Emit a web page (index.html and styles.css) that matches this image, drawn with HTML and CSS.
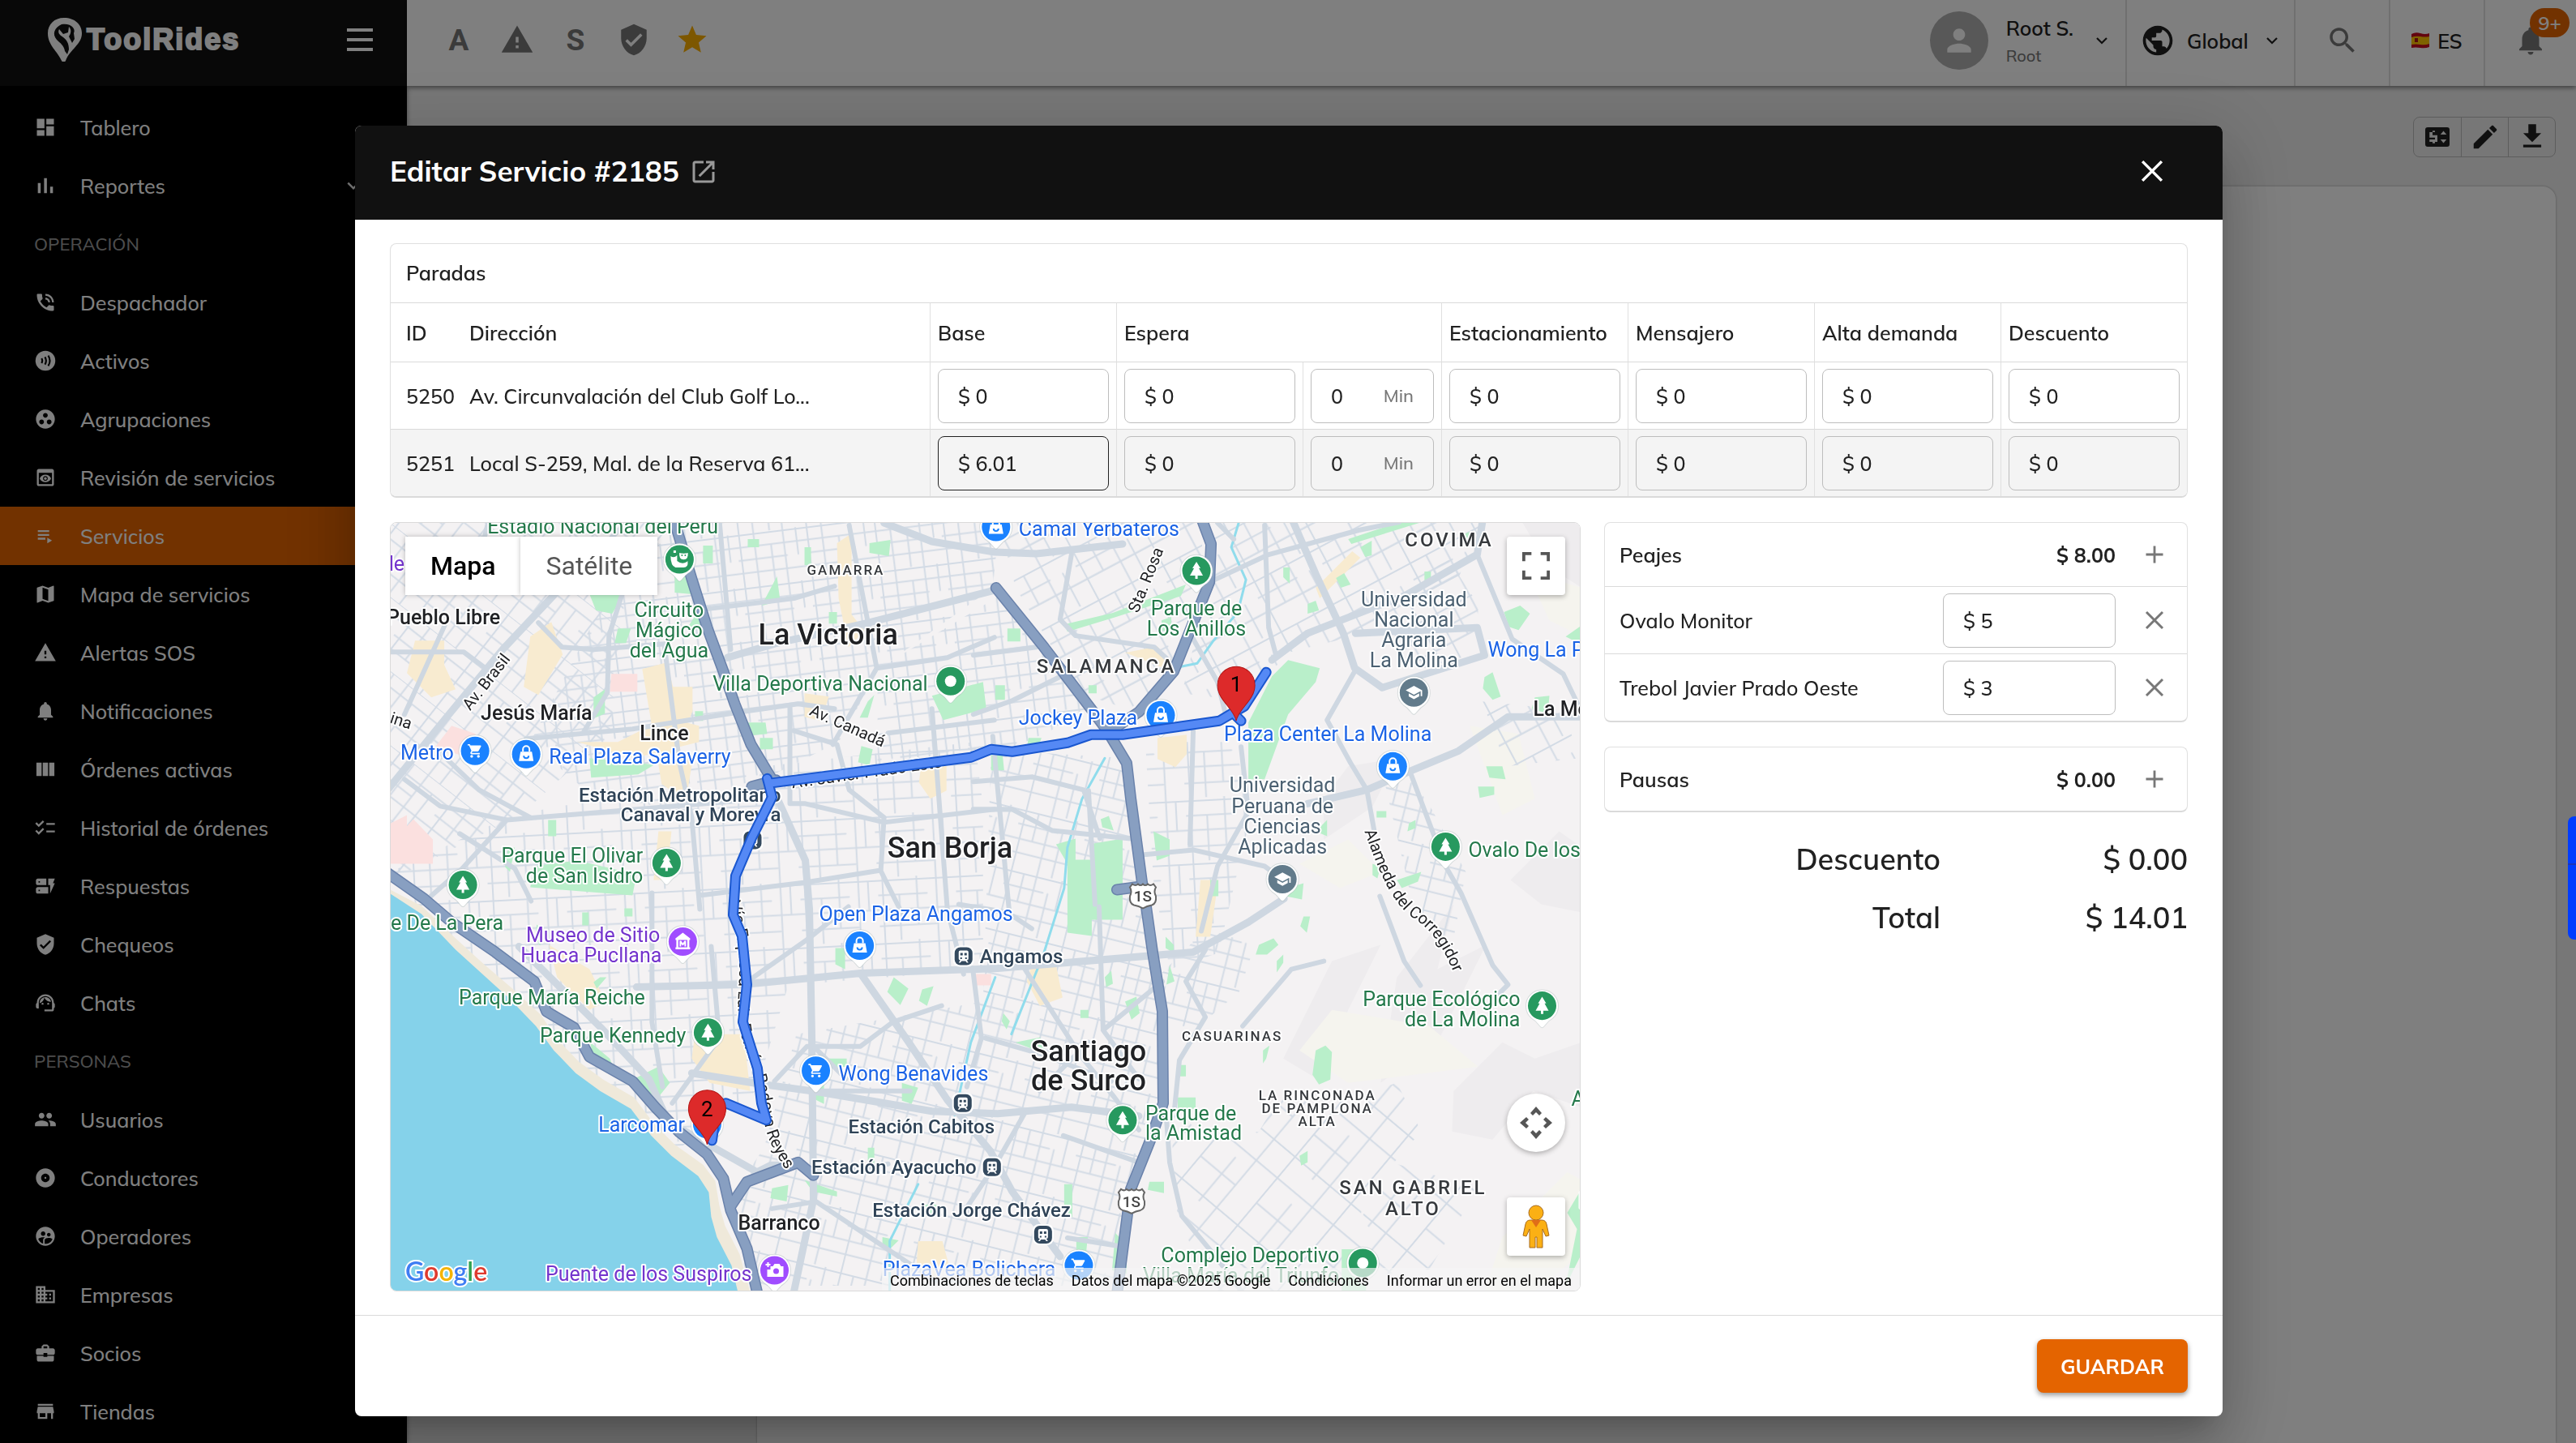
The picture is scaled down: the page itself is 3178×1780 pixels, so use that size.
FILE: index.html
```html
<!DOCTYPE html>
<html lang="es">
<head>
  <meta charset="UTF-8" />
  <title>ToolRides - Editar Servicio</title>
  <link rel="stylesheet" href="styles.css">
</head>
<body>

<!-- icon sprite -->
<svg class="sprite" aria-hidden="true">
  <symbol id="i-chevron" viewBox="0 0 24 24"><path d="M4 8l8 8 8-8" fill="none" stroke="currentColor" stroke-width="3"/></symbol>
  <symbol id="i-warning" viewBox="0 0 24 24"><path d="M1 21h22L12 2 1 21zm12-3h-2v-2h2v2zm0-4h-2v-4h2v4z"/></symbol>
  <symbol id="i-shield" viewBox="0 0 24 24"><path d="M12 1L3 5v6c0 5.55 3.84 10.74 9 12 5.16-1.26 9-6.45 9-12V5l-9-4zm-2 16l-4-4 1.41-1.41L10 14.17l6.59-6.59L18 9l-8 8z"/></symbol>
  <symbol id="i-bell" viewBox="0 0 24 24"><path d="M12 22c1.1 0 2-.9 2-2h-4c0 1.1.89 2 2 2zm6-6v-5c0-3.07-1.64-5.64-4.5-6.32V4c0-.83-.67-1.5-1.5-1.5s-1.5.67-1.5 1.5v.68C7.63 5.36 6 7.92 6 11v5l-2 2v1h16v-1l-2-2z"/></symbol>
  <symbol id="i-plus" viewBox="0 0 24 24"><path d="M12 3v18M3 12h18" fill="none" stroke="currentColor" stroke-width="2.4"/></symbol>
  <symbol id="i-close" viewBox="0 0 24 24"><path d="M4.5 4.5l15 15M19.5 4.5l-15 15" fill="none" stroke="currentColor" stroke-width="2.2"/></symbol>
  <!-- map markers, centred on 0,0 -->
  <symbol id="m-base" viewBox="-26 -26 52 60" overflow="visible"><path d="M0 27C-3 27-5 20-13 15.5A20 20 0 1 1 13 15.5C5 20 3 27 0 27z" fill="#fff" stroke="#9aa" stroke-opacity=".35"/><circle r="17.5" fill="currentColor"/></symbol>
  <symbol id="m-tree" viewBox="-26 -26 52 60" overflow="visible"><use href="#m-base" x="-26" y="-26" width="52" height="60"/><path d="M0-11L-5-3h2L-8 6h6.5v4h3V6H8L3-3h2z" fill="#fff"/></symbol>
  <symbol id="m-dot" viewBox="-26 -26 52 60" overflow="visible"><use href="#m-base" x="-26" y="-26" width="52" height="60"/><circle r="7" fill="#fff"/></symbol>
  <symbol id="m-bag" viewBox="-26 -26 52 60" overflow="visible"><use href="#m-base" x="-26" y="-26" width="52" height="60"/><path d="M-7-3H7L9 8.5H-9z" fill="#fff"/><path d="M-4-3v-3a4 4 0 0 1 8 0v3" fill="none" stroke="#fff" stroke-width="2"/><path d="M-3 2a3 3 0 0 0 6 0" fill="none" stroke="currentColor" stroke-width="2"/></symbol>
  <symbol id="m-cart" viewBox="-26 -26 52 60" overflow="visible"><use href="#m-base" x="-26" y="-26" width="52" height="60"/><path transform="translate(-10 -10) scale(.83)" fill="#fff" d="M7 18c-1.1 0-1.99.9-1.99 2S5.9 22 7 22s2-.9 2-2-.9-2-2-2zM1 2v2h2l3.6 7.59-1.35 2.45c-.16.28-.25.61-.25.96 0 1.1.9 2 2 2h12v-2H7.42c-.14 0-.25-.11-.25-.25l.03-.12.9-1.63h7.45c.75 0 1.41-.41 1.75-1.03l3.58-6.49c.08-.14.12-.31.12-.48 0-.55-.45-1-1-1H5.21l-.94-2H1zm16 16c-1.1 0-1.99.9-1.99 2s.89 2 1.99 2 2-.9 2-2-.9-2-2-2z"/></symbol>
  <symbol id="m-school" viewBox="-26 -26 52 60" overflow="visible"><use href="#m-base" x="-26" y="-26" width="52" height="60"/><path transform="translate(-11 -11) scale(.92)" fill="#fff" d="M5 13.18v4L12 21l7-3.82v-4L12 17l-7-3.82zM12 3L1 9l11 6 9-4.91V17h2V9L12 3z"/></symbol>
  <symbol id="m-museum" viewBox="-26 -26 52 60" overflow="visible"><use href="#m-base" x="-26" y="-26" width="52" height="60"/><path d="M0-11L-9-4v2H9v-2zM-9 7H9v2.5H-9zM-8-2h2.5v9H-8zM5.5-2H8v9H5.5zM-4 6v-7h2l2 3 2-3h2v7H2V3L0 5-2 3v3z" fill="#fff"/></symbol>
  <symbol id="m-camera" viewBox="-26 -26 52 60" overflow="visible"><use href="#m-base" x="-26" y="-26" width="52" height="60"/><path d="M-9-1h4v-4h3l2-3h6l2 3h3V8H-9z" fill="#fff"/><circle cx="2" cy="1" r="3.5" fill="currentColor"/><path d="M-8-10v6M-11-7h6" stroke="#fff" stroke-width="2"/></symbol>
  <symbol id="m-mask" viewBox="-26 -26 52 60" overflow="visible"><use href="#m-base" x="-26" y="-26" width="52" height="60"/><path d="M-11-4q4 3 8-1v7q6 5 12 1l1-1q1 8-5 8h-10q-6-2-6-14z" fill="#fff"/><path d="M-1-9q6 2 12 0 1 10-6 10t-6-10z" fill="#fff" stroke="currentColor" stroke-width="1.5"/><circle cx="3" cy="-5" r="1" fill="currentColor"/><circle cx="7" cy="-5" r="1" fill="currentColor"/><path d="M-6-11v3" stroke="#fff" stroke-width="3"/></symbol>
  <symbol id="m-train" viewBox="-14 -14 28 28" overflow="visible"><rect x="-13" y="-13" width="26" height="26" rx="8" fill="#fff"/><rect x="-11" y="-11" width="22" height="22" rx="7" fill="#34495e"/><path d="M-6-5q0-2 2-2h8q2 0 2 2v8q0 2-2 2l2 3h-2l-1.5-2h-5L-4 8h-2l2-3q-2 0-2-2z" fill="#fff"/><path d="M-4-4h3v3h-3zM1-4h3v3H1zM-4 1.5h2v2h-2zM2 1.5h2v2H2z" fill="#34495e"/></symbol>
  <symbol id="m-shield" viewBox="-18 -18 36 36" overflow="visible"><path d="M-13-15q4 3 7 0 3 3 6 0 3 3 6 0 3 3 7 0l3 4q-3 5 0 11 1 9-5 11-6 1-11 4-5-3-11-4-6-2-5-11 3-6 0-11z" fill="#fff" stroke="#666" stroke-width="2"/></symbol>
</svg>

<div class="app">
  <aside class="sidebar">
    <div class="brand">
      <a class="logo" href="#">
        <svg width="44" height="54" viewBox="0 0 44 54"><path d="M21 0C9 0 1 8 1 19c0 15 12 22 17 34 1 2 4 2 5 0 5-14 20-20 20-34C43 8 34 0 21 0z"/><path class="logo-cut" d="M18 8c-9 4-12 12-6 19 4 4 9 7 10 14l3 4 2-6c0-8-3-12-7-15-5-3-7-6-5-10l5 6 6-2 1-7c4 4 2 9 0 12l4 8 3-5-1-7c3-6-4-13-15-11z"/></svg>
        <span>ToolRides</span>
      </a>
      <button class="burger" aria-label="Menú"><svg width="32" height="30" viewBox="0 0 32 30"><path d="M0 3h32M0 15h32M0 27h32" stroke="currentColor" stroke-width="4"/></svg></button>
    </div>
    <nav class="menu">
      <a href="#"><svg viewBox="0 0 24 24"><path d="M3 13h8V3H3v10zm0 8h8v-6H3v6zm10 0h8V11h-8v10zm0-18v6h8V3h-8z"/></svg>Tablero</a>
      <a href="#"><svg viewBox="0 0 24 24"><path d="M4 9.2h3V20H4zM10.6 4h3v16h-3zM17 13h3v7h-3z"/></svg>Reportes<svg class="more" viewBox="0 0 24 24"><use href="#i-chevron"/></svg></a>
      <h2>OPERACIÓN</h2>
      <a href="#"><svg viewBox="0 0 24 24"><path d="M20 15.5c-1.25 0-2.45-.2-3.57-.57-.35-.11-.74-.03-1.02.24l-2.2 2.2c-2.83-1.44-5.15-3.75-6.59-6.59l2.2-2.21c.28-.26.36-.65.25-1C8.7 6.45 8.5 5.25 8.5 4c0-.55-.45-1-1-1H4c-.55 0-1 .45-1 1 0 9.39 7.61 17 17 17 .55 0 1-.45 1-1v-3.5c0-.55-.45-1-1-1zM19 12h2c0-4.97-4.03-9-9-9v2c3.87 0 7 3.13 7 7zm-4 0h2c0-2.76-2.24-5-5-5v2c1.66 0 3 1.34 3 3z"/></svg>Despachador</a>
      <a href="#"><svg viewBox="0 0 24 24"><circle cx="12" cy="12" r="10.5"/><path d="M8 9.5q1.5 2.5 0 5M11.5 8q2.5 4 0 8M15 6.5q3.5 5.5 0 11" fill="none" stroke="#000" stroke-width="1.8"/></svg>Activos</a>
      <a href="#"><svg viewBox="0 0 24 24"><path d="M12 2C6.48 2 2 6.48 2 12s4.48 10 10 10 10-4.48 10-10S17.52 2 12 2zM8 17.5c-1.38 0-2.5-1.12-2.5-2.5s1.12-2.5 2.5-2.5 2.5 1.12 2.5 2.5-1.12 2.5-2.5 2.5zM9.5 8c0-1.38 1.12-2.5 2.5-2.5s2.5 1.12 2.5 2.5-1.12 2.5-2.5 2.5S9.5 9.38 9.5 8zm6.5 9.5c-1.38 0-2.5-1.12-2.5-2.5s1.12-2.5 2.5-2.5 2.5 1.12 2.5 2.5-1.12 2.5-2.5 2.5z"/></svg>Agrupaciones</a>
      <a href="#"><svg viewBox="0 0 24 24"><path d="M19 3H5c-1.11 0-2 .9-2 2v14c0 1.1.89 2 2 2h14c1.1 0 2-.9 2-2V5c0-1.1-.89-2-2-2zm0 16H5V7h14v12zm-5.5-6c0 .83-.67 1.5-1.5 1.5s-1.5-.67-1.5-1.5.67-1.5 1.5-1.5 1.5.67 1.5 1.5zM12 9c-2.73 0-5.06 1.66-6 4 .94 2.34 3.27 4 6 4s5.06-1.66 6-4c-.94-2.34-3.27-4-6-4zm0 6.5c-1.38 0-2.5-1.12-2.5-2.5s1.12-2.5 2.5-2.5 2.5 1.12 2.5 2.5-1.12 2.5-2.5 2.5z"/></svg>Revisión de servicios</a>
      <a href="#" class="active"><svg viewBox="0 0 24 24"><path d="M4 10h12v2H4zm0-4h12v2H4zm0 8h8v2H4zm10 0v6l5-3z"/></svg>Servicios</a>
      <a href="#"><svg viewBox="0 0 24 24"><path d="M20.5 3l-.16.03L15 5.1 9 3 3.36 4.9c-.21.07-.36.25-.36.48V20.5c0 .28.22.5.5.5l.16-.03L9 18.9l6 2.1 5.64-1.9c.21-.07.36-.25.36-.48V3.5c0-.28-.22-.5-.5-.5zM15 19l-6-2.11V5l6 2.11V19z"/></svg>Mapa de servicios</a>
      <a href="#"><svg viewBox="0 0 24 24"><use href="#i-warning"/></svg>Alertas SOS</a>
      <a href="#"><svg viewBox="0 0 24 24"><use href="#i-bell"/></svg>Notificaciones</a>
      <a href="#"><svg viewBox="0 0 24 24"><path d="M2.5 5h5.5v14H2.5zM9.2 5h5.6v14H9.2zM16 5h5.5v14H16z"/></svg>Órdenes activas</a>
      <a href="#"><svg viewBox="0 0 24 24"><path d="M2 7l3 3 5-5M2 15l3 3 5-5M13 8h9M13 16h9" fill="none" stroke="currentColor" stroke-width="2"/></svg>Historial de órdenes</a>
      <a href="#"><svg viewBox="0 0 24 24"><path d="M17 20v-9h-2V4h7l-2 5h2l-5 11zm-2-7v7H4c-1.1 0-2-.9-2-2v-3c0-1.1.9-2 2-2h11zm-8.75 2.75h-1.5v1.5h1.5v-1.5zM13 4v7H4c-1.1 0-2-.9-2-2V6c0-1.1.9-2 2-2h9zM6.25 6.75h-1.5v1.5h1.5v-1.5z"/></svg>Respuestas</a>
      <a href="#"><svg viewBox="0 0 24 24"><use href="#i-shield"/></svg>Chequeos</a>
      <a href="#"><svg viewBox="0 0 24 24"><path d="M21 12.22C21 6.73 16.74 3 12 3c-4.69 0-9 3.65-9 9.28-.6.34-1 .98-1 1.72v2c0 1.1.9 2 2 2h1v-6.1c0-3.87 3.13-7 7-7s7 3.13 7 7V19h-8v2h8c1.1 0 2-.9 2-2v-1.22c.59-.31 1-.92 1-1.64v-2.3c0-.7-.41-1.31-1-1.62z"/><circle cx="9" cy="13" r="1"/><circle cx="15" cy="13" r="1"/><path d="M18 11.03C17.52 8.18 15.04 6 12.05 6c-3.03 0-6.29 2.51-6.03 6.45 2.47-1.01 4.33-3.21 4.86-5.89 1.31 2.63 4 4.44 7.12 4.47z"/></svg>Chats</a>
      <h2>PERSONAS</h2>
      <a href="#"><svg viewBox="0 0 24 24"><path d="M16 11c1.66 0 2.99-1.34 2.99-3S17.66 5 16 5c-1.66 0-3 1.34-3 3s1.34 3 3 3zm-8 0c1.66 0 2.99-1.34 2.99-3S9.66 5 8 5C6.34 5 5 6.34 5 8s1.34 3 3 3zm0 2c-2.33 0-7 1.17-7 3.5V19h14v-2.5c0-2.33-4.67-3.5-7-3.5zm8 0c-.29 0-.62.02-.97.05 1.16.84 1.97 1.97 1.97 3.45V19h6v-2.5c0-2.33-4.67-3.5-7-3.5z"/></svg>Usuarios</a>
      <a href="#"><svg viewBox="0 0 24 24"><path d="M12 2C6.48 2 2 6.48 2 12s4.48 10 10 10 10-4.48 10-10S17.52 2 12 2zm0 14.5c-2.49 0-4.5-2.01-4.5-4.5S9.51 7.5 12 7.5s4.5 2.01 4.5 4.5-2.01 4.5-4.5 4.5zm0-5.5c-.55 0-1 .45-1 1s.45 1 1 1 1-.45 1-1-.45-1-1-1z"/></svg>Conductores</a>
      <a href="#"><svg viewBox="0 0 24 24"><path d="M11.99 2c-5.52 0-10 4.48-10 10s4.48 10 10 10 10-4.48 10-10-4.48-10-10-10zm3.61 6.34c1.07 0 1.93.86 1.93 1.93 0 1.07-.86 1.93-1.93 1.93-1.07 0-1.93-.86-1.93-1.93-.01-1.07.86-1.93 1.93-1.93zm-6-1.58c1.3 0 2.36 1.06 2.36 2.36 0 1.3-1.06 2.36-2.36 2.36s-2.36-1.06-2.36-2.36c0-1.31 1.05-2.36 2.36-2.36zm0 9.13v3.75c-2.4-.75-4.3-2.6-5.14-4.96 1.05-1.12 3.67-1.69 5.14-1.69.53 0 1.2.08 1.9.22-1.64.87-1.9 2.02-1.9 2.68zM11.99 20c-.27 0-.53-.01-.79-.04v-4.07c0-1.42 2.94-2.13 4.4-2.13 1.07 0 2.92.39 3.84 1.15-1.17 2.97-4.06 5.09-7.45 5.09z"/></svg>Operadores</a>
      <a href="#"><svg viewBox="0 0 24 24"><path d="M12 7V3H2v18h20V7H12zM6 19H4v-2h2v2zm0-4H4v-2h2v2zm0-4H4V9h2v2zm0-4H4V5h2v2zm4 12H8v-2h2v2zm0-4H8v-2h2v2zm0-4H8V9h2v2zm0-4H8V5h2v2zm10 12h-8v-2h2v-2h-2v-2h2v-2h-2V9h8v10zm-2-8h-2v2h2v-2zm0 4h-2v2h2v-2z"/></svg>Empresas</a>
      <a href="#"><svg viewBox="0 0 24 24"><path d="M10 16v-1H3.01L3 19c0 1.11.89 2 2 2h14c1.11 0 2-.89 2-2v-4h-7v1h-4zm10-9h-4.01V5l-2-2h-4l-2 2v2H4c-1.1 0-2 .9-2 2v3c0 1.11.89 2 2 2h6v-2h4v2h6c1.1 0 2-.9 2-2V9c0-1.1-.9-2-2-2zm-6 0h-4V5h4v2z"/></svg>Socios</a>
      <a href="#"><svg viewBox="0 0 24 24"><path d="M20 4H4v2h16V4zm1 10v-2l-1-5H4l-1 5v2h1v6h10v-6h4v6h2v-6h1zm-9 4H6v-4h6v4z"/></svg>Tiendas</a>
    </nav>
  </aside>

  <div class="main">
    <header class="topbar">
      <div class="quick">
        <button>A</button>
        <button aria-label="Alertas"><svg width="42" height="42"><use href="#i-warning"/></svg></button>
        <button>S</button>
        <button aria-label="Chequeos"><svg width="42" height="42"><use href="#i-shield"/></svg></button>
        <button class="star" aria-label="Favoritos"><svg width="42" height="42" viewBox="0 0 24 24"><path d="M12 17.27L18.18 21l-1.64-7.03L22 9.24l-7.19-.61L12 2 9.19 8.63 2 9.24l5.46 4.73L5.82 21z"/></svg></button>
      </div>
      <button class="user">
        <span class="avatar"><svg width="44" height="44" viewBox="0 0 24 24"><path d="M12 12c2.21 0 4-1.79 4-4s-1.79-4-4-4-4 1.79-4 4 1.79 4 4 4zm0 2c-2.67 0-8 1.34-8 4v2h16v-2c0-2.66-5.33-4-8-4z"/></svg></span>
        <span class="who"><span>Root S.</span><small>Root</small></span>
        <svg class="caret" viewBox="0 0 24 24"><use href="#i-chevron"/></svg>
      </button>
      <button class="region">
        <svg width="44" height="44" viewBox="0 0 24 24"><path d="M12 2C6.48 2 2 6.48 2 12s4.48 10 10 10 10-4.48 10-10S17.52 2 12 2zm-1 17.93c-3.95-.49-7-3.85-7-7.93 0-.62.08-1.21.21-1.79L9 15v1c0 1.1.9 2 2 2v1.93zm6.9-2.54c-.26-.81-1-1.39-1.9-1.39h-1v-3c0-.55-.45-1-1-1H8v-2h2c.55 0 1-.45 1-1V7h2c1.1 0 2-.9 2-2v-.41c2.93 1.19 5 4.06 5 7.41 0 2.08-.8 3.97-2.1 5.39z"/></svg>
        <span>Global</span>
        <svg class="caret" viewBox="0 0 24 24"><use href="#i-chevron"/></svg>
      </button>
      <button class="cell muted" aria-label="Buscar"><svg width="42" height="42" viewBox="0 0 24 24"><path d="M15.5 14h-.79l-.28-.27C15.41 12.59 16 11.11 16 9.5 16 5.91 13.09 3 9.5 3S3 5.91 3 9.5 5.91 16 9.5 16c1.61 0 3.09-.59 4.23-1.57l.27.28v.79l5 4.99L20.49 19l-4.99-5zm-6 0C7.01 14 5 11.99 5 9.5S7.01 5 9.5 5 14 7.01 14 9.5 11.99 14 9.5 14z"/></svg></button>
      <button class="cell">
        <svg width="22" height="20" viewBox="0 0 22 20"><path fill="#c60b1e" d="M0 2q5-3 11-1t11 0v17q-5 2-11 1T0 19z"/><path fill="#ffc400" d="M0 6q5-2 11-1t11 0v9q-5 2-11 1T0 15z"/><path fill="#ad1519" d="M4 7h4v5H4z"/></svg>
        <span>ES</span>
      </button>
      <button class="cell muted bell" aria-label="Notificaciones"><svg width="42" height="42"><use href="#i-bell"/></svg><span class="badge">9+</span></button>
    </header>

    <div class="page">
      <div class="tools">
        <button aria-label="Precio"><svg width="36" height="36" viewBox="0 0 24 24"><path d="M4 4q-2 0-2 2v12q0 2 2 2h16q2 0 2-2V6q0-2-2-2zm8 4H8v2.5h4V16H10v1.2H8V16H5.5v-2H10v-1.5H5.5V8H8V6.8h2V8h2zm5 9l-2.5-3h5zm-2.5-7L17 7l2.5 3z"/></svg></button>
        <button aria-label="Editar"><svg width="38" height="38" viewBox="0 0 24 24"><path d="M3 17.25V21h3.75L17.81 9.94l-3.75-3.75L3 17.25zM20.71 7.04c.39-.39.39-1.02 0-1.41l-2.34-2.34c-.39-.39-1.02-.39-1.41 0l-1.83 1.83 3.75 3.75 1.83-1.83z"/></svg></button>
        <button aria-label="Descargar"><svg width="38" height="38" viewBox="0 0 24 24"><path d="M5 20h14v-2H5v2zM19 9h-4V2H9v7H5l7 7 7-7z"/></svg></button>
      </div>
      <div class="sheet"></div>
    </div>
  </div>
</div>

<div class="overlay">
  <section class="dialog" role="dialog" aria-labelledby="dlg-title">
    <header class="dialog-head">
      <h1 id="dlg-title">Editar Servicio #2185</h1>
      <a href="#" aria-label="Abrir servicio"><svg width="36" height="36" viewBox="0 0 24 24"><path d="M19 19H5V5h7V3H5c-1.11 0-2 .9-2 2v14c0 1.1.89 2 2 2h14c1.1 0 2-.9 2-2v-7h-2v7zM14 3v2h3.59l-9.83 9.83 1.41 1.41L19 6.41V10h2V3h-7z"/></svg></a>
      <button class="close" aria-label="Cerrar"><svg width="38" height="38"><use href="#i-close"/></svg></button>
    </header>

    <div class="dialog-body">
      <div class="card stops">
        <h3>Paradas</h3>
        <table>
          <colgroup><col class="c-id"><col><col class="c-money"><col class="c-money"><col class="c-min"><col class="c-money"><col class="c-money"><col class="c-money"><col class="c-money"></colgroup>
          <thead>
            <tr><th>ID</th><th>Dirección</th><th>Base</th><th colspan="2">Espera</th><th>Estacionamiento</th><th>Mensajero</th><th>Alta demanda</th><th>Descuento</th></tr>
          </thead>
          <tbody>
            <tr>
              <td>5250</td><td>Av. Circunvalación del Club Golf Lo...</td>
              <td><input value="$ 0" aria-label="Base 5250"></td>
              <td><input value="$ 0" aria-label="Espera 5250"></td>
              <td><label class="field"><input value="0" aria-label="Minutos de espera 5250"><span>Min</span></label></td>
              <td><input value="$ 0" aria-label="Estacionamiento 5250"></td>
              <td><input value="$ 0" aria-label="Mensajero 5250"></td>
              <td><input value="$ 0" aria-label="Alta demanda 5250"></td>
              <td><input value="$ 0" aria-label="Descuento 5250"></td>
            </tr>
            <tr class="hover">
              <td>5251</td><td>Local S-259, Mal. de la Reserva 61...</td>
              <td><input class="on" value="$ 6.01" aria-label="Base 5251"></td>
              <td><input value="$ 0" aria-label="Espera 5251"></td>
              <td><label class="field"><input value="0" aria-label="Minutos de espera 5251"><span>Min</span></label></td>
              <td><input value="$ 0" aria-label="Estacionamiento 5251"></td>
              <td><input value="$ 0" aria-label="Mensajero 5251"></td>
              <td><input value="$ 0" aria-label="Alta demanda 5251"></td>
              <td><input value="$ 0" aria-label="Descuento 5251"></td>
            </tr>
          </tbody>
        </table>
      </div>

      <div class="columns">
        <div class="map">
          <svg class="map-canvas" viewBox="0 0 1466 946" preserveAspectRatio="xMinYMin slice">
            <defs>
              <!-- street grids -->
              <pattern id="g1" width="88" height="72" patternUnits="userSpaceOnUse" patternTransform="rotate(38)"><path class="st" d="M0 0h88M0 16h88M0 34h52M0 50h88M8 0v72M30 0v50M52 0v72M70 16v56"/></pattern>
              <pattern id="g2" width="84" height="66" patternUnits="userSpaceOnUse" patternTransform="rotate(-7)"><path class="st" d="M0 2h84M0 17h84M0 33h60M0 49h84M4 0v66M22 0v66M42 17v49M58 0v66M74 0v33"/></pattern>
              <pattern id="g3" width="96" height="78" patternUnits="userSpaceOnUse" patternTransform="rotate(-3)"><path class="st" d="M0 4h96M0 22h60M0 40h96M0 60h70M6 0v78M26 22v56M48 0v60M72 0v78M84 4v36"/></pattern>
              <pattern id="g4" width="84" height="76" patternUnits="userSpaceOnUse" patternTransform="rotate(14)"><path class="st" d="M0 3h84M0 20h50M0 38h84M0 55h84M6 0v76M22 3v35M38 0v76M56 20v56M70 0v38"/></pattern>
              <pattern id="g5" width="90" height="70" patternUnits="userSpaceOnUse" patternTransform="rotate(-28)"><path class="st" d="M0 4h90M0 24h54M0 44h90M6 0v70M28 4v40M52 0v70M72 24v46"/></pattern>
              <pattern id="g6" width="110" height="90" patternUnits="userSpaceOnUse" patternTransform="rotate(-50)"><path class="st" d="M0 6h110M0 40h70M0 62h110M8 0v90M44 6v56M84 0v90"/></pattern>
              <path id="p-alameda" d="M1200 380C1218 430 1234 470 1262 488S1304 536 1320 580"/>
              <path id="p-bedoya" d="M417 468Q433 520 429 570T438 650Q454 690 460 735T516 830"/>
            </defs>

            <rect class="land" width="1468" height="948"/>
            <g class="relief">
              <path d="M1395 0h73v80l-40-25zM1180 300l60-10-30 60-60 40 0-50zM1240 560l70-90-20 80 60-30-60 120-70 50zM1310 700l60-60 40 20 58-20v80l-60-20-50 60-50-10zM1100 660l60-120 60-20-40 80-30 90zM1380 440l60-60 28 20v80l-50-10z"/>
              <path class="warm" d="M1330 250l60 10 20 80-40 20zM1160 600l120 20 60 50-160 20-60-40zM1370 880l80-80 18 10v90l-60 48h-60zM1400 60l68 20v60l-40-20zM1120 420l60-30 40 40-50 20z"/>
            </g>

            <!-- built up areas -->
            <path fill="url(#g1)" d="M0 0h350l-60 80-20 180-110 100L0 440z"/>
            <path fill="url(#g2)" d="M350 0h400l-8 80-140 100-50 90-80 40-130 40-90-10-80-70 100-190z"/>
            <path fill="url(#g3)" d="M150 360l110-20 180 0 20-40 260-30 10 80 0 200-240 20-40 130-120 90-60-20-80-160-110-80-80-100z"/>
            <path fill="url(#g4)" d="M740 280l170 10 20 150 20 160v110l-30 110-20 120H440l-20-110 40-60 40-140 230-40z"/>
            <path fill="url(#g2)" d="M600 180l150-90 120 140-110 50-160 20z"/>
            <path fill="url(#g5)" d="M750 0h250v80l-40 110-50 40-60-20-80-130z"/>
            <path fill="url(#g5)" d="M1015 0h330l-30 70-90 60-120 30-50 60-80-10 30-120z"/>
            <path fill="url(#g3)" d="M930 270h110l20 90-40 170-60 20-20-110z"/>
            <path fill="url(#g4)" d="M945 560l60-60 60 20-20 60-50 40h-40zM1225 320l40 0 60 110-20 110-50-90z"/>
            <path fill="url(#g6)" d="M960 720l50 40 60-10 30-50 80 10 60-20 30 60-70 80-20 100-60 20h-100l-50-90zM1180 880l60-90 100 30-60 100-100 10z"/>
            <path fill="url(#g5)" d="M1345 220l100 10 20 60-90 10zM1230 130l70-90 40 60v60l-70 20z"/>

            <!-- blocks and parks -->
            <g class="shop">
              <path d="M550 25l18-12 0 100 16 20-20 20-12-60zM172 140l26-18 14 40-30 50-18-10zM30 145h36v30l14 30-30 10-30-30zM310 180l30-8 8 30 24 0 0 30-20 50 20 10-8 50-30-20zM510 210l30 4-10 30-20-5zM655 290l30 0 0 40-20 10-14-20zM375 630l60 0 8 70-50-10-22-30zM195 520l50 30 20 40-20 10-40-40zM905 160l40-8 24 30-8 0-50-20zM790 545l30 0 8 40-28 10-16-30zM945 265l36-4 0 24-14 16-22-10zM998 440l22 0-10 70-18 0zM1140 80l45-45 10 8-50 50zM650 885l30 0 8 30-20 20-20-20zM330 380l16 0-6 60-16 0zM230 270h50l60-30 40 10 0 20-80 20z"/>
            </g>
            <g class="pink"><path d="M272 186l32 0 0 22-34 0zM75 250l30 10-20 26-30-10zM0 395l28-30 24 25 0 30-52 0zM716 556h24v14h-22zM0 370l20-10 0 40-20 10z"/></g>
            <g class="park">
              <path d="M1106 169l39 10-5 17-34 40-29 80h-20l0-70 29-57zM667 213l63-17 4 33-53 14zM177 423l53-7 73 17-5 26-126-10zM820 396l24-7v26h22v-20l36-6 0 100-38 0 0 20-30-4 0-85zM350 60h16l6 28-22-2zM245 88h42l-14 24-20-4zM245 290l80 8-20 12-58 4zM365 130l20-30 8 28zM458 100l18-34 4 30-22 6zM830 125l60-14 90-35-6 14-80 26-60 18zM1180 20l90-30 4 8-90 28zM1372 110l20-8 12 10-14 20-12-4zM1350 300h20l4 16-20-2zM1448 140l20-14v24zM1140 380l14-14 0 20zM1105 450l20-6-2 20-20-4z"/>
              <path d="M740 285l14 0 2 20-16 0zM440 246h22l2 14-20 2zM588 220l8-8-8 28-10 0zM580 275l14 4-4 20-14-4zM455 265h16v14h-16zM590 25l26-4-2 20-24-4zM440 20h14v10h-14zM540 110h10v14h-10zM510 30h8v22h-8zM385 28h12v22h-12zM250 215l14-10 0 30-14 6zM280 130h16l-6 18h-14zM375 232h10v12h-10zM194 366h10v20h-10zM145 400l8 0-6 30-6-6zM180 495l10 8-6 18-6-10zM236 480h8v16h-8zM258 560l8 0-12 14-4-8zM288 475h10v10h-10zM290 690l40-20 14 20-16 20zM246 640l24 20 10 24-30-20zM520 690l14-4 0 30-16-8zM548 524h12v26l-12-6zM540 660h22v10l-24 2zM620 560l18 14-10 20-16-16zM655 575l14-4-8 24-10-6zM655 840l20 0-10 12-12-4zM470 820l20-4-2 20-20-4zM510 810l40 14 0 6-30-6zM588 770h8v26h-8zM606 880l20 4-12 12-8-6zM630 690l20 6-8 20-12-4z"/>
              <path d="M850 600h10v10h-10zM905 590l14-6 4 20-10 8zM880 560l8-8 2 16-8 4zM755 604l8 10-4 10-6-10zM770 640l30-6 10 10-10 8zM845 880l14 0-4 40h-10zM830 815h10v40h-10zM893 875l14 14 0 36-18-4zM935 812h18l0 14-20-4zM970 708h22v14h-22zM972 668h8v14h-8zM955 510l10 10 0 10-10-6zM960 545l6 20-10 4zM1140 650l12-6 8 8-2 34-14 6-8-12zM1070 520l18-8 6 8-14 12-14 0zM1092 540l8-8 0 10-8 12zM1125 485l8 0-4 20-8-8zM1075 650l8-6-4 16-4 6zM1120 780l10-6 0 14-8 4zM950 120l12-4 0 20-12-4zM760 130h16v16h-16zM745 200h12v18h-12zM786 265h16l-4 12-14 0zM860 200h10v10h-10zM1100 55h8l0 20-8-8zM1195 30l14-8 0 18-8 2zM1130 100l10-4 4 12-14 4zM1165 68l10-6 8 14-12 4zM1274 60h8v14h-8zM1320 15l10-4 0 10-8 4zM1348 190l10-6 10 30-10 4-12-14zM1410 215l18-2-2 22-20-6zM1340 325l20 0 0 10-18 4zM1215 355h12v8h-12zM1255 370l8-4 0 10-10 4zM1210 420l10 4-4 14-6-4zM1240 440l30-10-4 12-20 8zM1172 895h30v53h-30zM1450 850l18-30 0 80-20 40 14-70zM940 380l20 10 0 20-16 6zM875 365l10-4 6 18-14-4zM1010 440h10v20h-10z"/>
            </g>

            <!-- streams -->
            <g class="stream"><path d="M1045 0l-9 30 18 40-10 40-30 35-20 28-20 4-40 50M880 290l-28 50-18 60-4 50-25 80-40 100M650 815l-35 70 0 63M745 560l-30 80-20 90"/></g>

            <!-- avenues -->
            <g class="road big">
              <path d="M-7 333L66 243 138 156 201 89 222 60M303 572l131-3 145-14 169-6 241-20 68-37 44-29M371 678l82 13 73 10 141 24 81 3 91-8 83 11M579 555l58 83 49 73 53 63 27 50 59 80M158 522l101 100 59 63 24 53 106 60M415 166l58-17 116-26 155-40"/>
              <path d="M1086 169l44-33 121-47 88-50 8-50M1130 346l73-17 53-23 60-25 61-42h92M1111-4l29 67 34 73 14 43 34 24 126-40-9-34-150 7M608 0l59 23 77 13 52 2 106-12M478 343l33 73 5 60 3 159 2 199-24 113"/>
            </g>
            <g class="road">
              <path d="M68 123L17 236M-6 159h96l40 30M288 79l-19 60-2 70-30 50M182 123l29 30 39 3 87-7M167 266l131-12 126-20 78-11 45 6M61 283l48 46 63 34M17 316l44 33 82 17 281-23M143 366l-55 60-42 37M85 383l68 43 20 40M337 149l19 147 15 67 10 113M405-4l14 160M390 106l107-13 50-15M565 3l34 176-54 94M599 179l87-13 58-25M613 259l131-16M667 229l4 50 15 197 20 80M497 256l53 17 15 56 43 34-4 66 30 60M608 369l136-16M492 226v120l19 0 97 23M381 459l130-16 93-15M434 569l80-56 50-40"/>
              <path d="M395 522l10 113-58 80M322 456v159l13 80M473 688l40-43h66l40-30 60-20M521 645l40 40M781 549l68 106 43 53 30 40M718 555l10 80-18 60M733 635l70 20 85 33M873 473l5 152 44 60M878 625l73-60M781 728l-34 60-40 60M829 755l93 33M834 881l63 10M955 721l5 67 15 66 44 53 30 41M1004 526l-24 39 24 44-32 53-6 60M1077 3l5 126 9 34M1009 73l73-34 111-30 50-10M1339 39l43 104 63 43 24 50M1188 183l-34 60 29 53 20 33 9 50M1256 306l44 117 19 33 39 89 19 24-20 20M989 256l-4 140"/>
              <path d="M718 319l73-6 63 16 20 60M718 353h48l49 26 97 10M926 409l63-6 88 20 22 16M1048 276l9 80-38 67-20 80M718 236l48-17 60-30M839 39l-14 80 19 20 97 14 24 22M718 163l78-10M742 263l20 213M989 143l30 53 10 40M700 470l60 10 30 20M860 330l8 140M1219 460l30 80 20 30M448 800l20-10 25 0 60 10 60-10M521 834l60 40 90 60M470 845l50-8M1019 0l20 20M290 0l-60 60M120 0l-20 80M30 60l120-10M640 700l-120 0M860 640l-60 60M1050 620l60-70 40-10"/>
            </g>

            <!-- sea -->
            <path class="beach" d="M-8 448l46 24 42 40 35 32 35 30 35 32 20 30 27 28 30 22 38 22 25 33 25 25 35 25 15 20 5 30 7 25 18 35 14 50H-8z"/>
            <path class="water" d="M-8 452l46 30 42 44 33 30 33 30 33 34 22 30 27 28 30 22 38 22 25 33 25 25 33 25 13 20 3 30 7 25 18 35 12 50H-8z"/>

            <!-- highways -->
            <g class="hwy-edge"><use href="#hwy"/></g>
            <g class="hwy"><path id="hwy" d="M-6 430l47 33 34 29 54 37 48 36 15 37 34 20 19 36 53 30 29 33 29 30 34 27 20 30 9 39 20 47 14 60M419 842l20-30 29-11 34-13 19 16M349-4l22 73 19 60 20 54 14 40 20 50 24 40M746 80l59 73 58 76 20 27 24 40 5 43 14 104 5 30 8 56 12 73 1 113-16 46-24 60-17 130M999-6l12 32-2 47-20 50-24 60-43 50-39 26M445 325l30-8M895 452l30-4"/></g>

            <!-- area names -->
            <g class="lb green">
              <text x="119" y="13">Estadio Nacional del Perú</text>
              <text x="343" y="116" class="mid">Circuito</text><text x="343" y="141" class="mid">Mágico</text><text x="343" y="166" class="mid">del Agua</text>
              <text x="662" y="207" class="end">Villa Deportiva Nacional</text>
              <text x="993" y="114" class="mid">Parque de</text><text x="993" y="139" class="mid">Los Anillos</text>
              <text x="311" y="419" class="end">Parque El Olivar</text><text x="311" y="444" class="end">de San Isidro</text>
              <text x="0" y="501">e De La Pera</text>
              <text x="84" y="593">Parque María Reiche</text>
              <text x="364" y="640" class="end">Parque Kennedy</text>
              <text x="1328" y="412">Ovalo De los</text>
              <text x="930" y="736">Parque de</text><text x="930" y="760">la Amistad</text>
              <text x="1392" y="595" class="end">Parque Ecológico</text><text x="1392" y="620" class="end">de La Molina</text>
              <text x="1169" y="911" class="end">Complejo Deportivo</text><text x="1169" y="936" class="end">Villa María del Triunfo</text>
              <text x="1455" y="718">A</text><text x="1464" y="844">P</text>
            </g>
            <g class="lb blue">
              <text x="774" y="16">Camal Yerbateros</text><text x="12" y="292">Metro</text><text x="195" y="297">Real Plaza Salaverry</text>
              <text x="774" y="249">Jockey Plaza</text><text x="1027" y="269">Plaza Center La Molina</text><text x="1352" y="165">Wong La P</text>
              <text x="528" y="490">Open Plaza Angamos</text><text x="552" y="687">Wong Benavides</text><text x="256" y="750">Larcomar</text><text x="606" y="928">PlazaVea Bolichera</text>
            </g>
            <g class="lb purple">
              <text x="17" y="59" class="end">de</text>
              <text x="332" y="516" class="end">Museo de Sitio</text><text x="334" y="541" class="end">Huaca Pucllana</text>
              <text x="445" y="934" class="end">Puente de los Suspiros</text>
            </g>
            <g class="lb slate">
              <text x="1261" y="103" class="mid">Universidad</text><text x="1261" y="128" class="mid">Nacional</text><text x="1261" y="153" class="mid">Agraria</text><text x="1261" y="178" class="mid">La Molina</text>
              <text x="1099" y="332" class="mid">Universidad</text><text x="1099" y="358" class="mid">Peruana de</text><text x="1099" y="383" class="mid">Ciencias</text><text x="1099" y="408" class="mid">Aplicadas</text>
            </g>
            <g class="lb stop">
              <text x="481" y="344" class="end">Estación Metropolitano</text><text x="481" y="368" class="end">Canaval y Moreyra</text>
              <text x="726" y="542">Angamos</text><text x="564" y="752">Estación Cabitos</text><text x="722" y="802" class="end">Estación Ayacucho</text><text x="838" y="855" class="end">Estación Jorge Chávez</text>
            </g>
            <g class="lb town">
              <text x="135" y="125" class="end">Pueblo Libre</text><text x="111" y="243">Jesús María</text><text x="307" y="268">Lince</text><text x="428" y="871">Barranco</text><text x="1408" y="238">La Mo</text>
            </g>
            <g class="lb city">
              <text x="453" y="150">La Victoria</text><text x="612" y="413">San Borja</text><text x="860" y="663" class="mid">Santiago</text><text x="860" y="699" class="mid">de Surco</text>
            </g>
            <g class="lb caps"><text x="1250" y="29">COVIMA</text><text x="796" y="185">SALAMANCA</text><text x="1260" y="827" class="mid">SAN GABRIEL</text><text x="1260" y="853" class="mid">ALTO</text></g>
            <g class="lb caps small"><text x="513" y="64">GAMARRA</text><text x="975" y="638">CASUARINAS</text><text x="1142" y="711" class="mid">LA RINCONADA</text><text x="1142" y="727" class="mid">DE PAMPLONA</text><text x="1142" y="743" class="mid">ALTA</text></g>
            <g class="lb street">
              <text transform="translate(98 232) rotate(-52)">Av. Brasil</text>
              <text transform="translate(-2 246) rotate(18)">ina</text>
              <text transform="translate(515 236) rotate(24)">Av. Canadá</text>
              <text transform="translate(495 327) rotate(-8)">Av. Javier Prado Este</text>
              <text transform="translate(921 112) rotate(-68)">Sta. Rosa</text>
              <text><textPath href="#p-alameda">Alameda del Corregidor</textPath></text>
              <text><textPath href="#p-bedoya">Vía Expresa Luis Fernán Bedoya Reyes</textPath></text>
            </g>

            <!-- points of interest -->
            <g class="poi-green">
              <use href="#m-mask" x="330" y="19" width="52" height="60"/><use href="#m-dot" x="664" y="169" width="52" height="60"/><use href="#m-tree" x="314" y="393" width="52" height="60"/><use href="#m-tree" x="63" y="420" width="52" height="60"/><use href="#m-tree" x="967" y="33" width="52" height="60"/><use href="#m-tree" x="1274" y="373" width="52" height="60"/><use href="#m-tree" x="365" y="602" width="52" height="60"/><use href="#m-tree" x="1393" y="569" width="52" height="60"/><use href="#m-tree" x="876" y="710" width="52" height="60"/><use href="#m-dot" x="1172" y="886" width="52" height="60"/>
            </g>
            <g class="poi-blue">
              <use href="#m-cart" x="78" y="255" width="52" height="60"/><use href="#m-bag" x="141" y="259" width="52" height="60"/><use href="#m-bag" x="720" y="-21" width="52" height="60"/><use href="#m-bag" x="923" y="211" width="52" height="60"/><use href="#m-bag" x="1209" y="274" width="52" height="60"/><use href="#m-bag" x="552" y="495" width="52" height="60"/><use href="#m-cart" x="498" y="649" width="52" height="60"/><use href="#m-cart" x="822" y="889" width="52" height="60"/><use href="#m-bag" x="364" y="715" width="52" height="60"/>
            </g>
            <g class="poi-slate"><use href="#m-school" x="1235" y="183" width="52" height="60"/><use href="#m-school" x="1073" y="413" width="52" height="60"/></g>
            <g class="poi-purple"><use href="#m-museum" x="334" y="490" width="52" height="60"/><use href="#m-camera" x="447" y="895" width="52" height="60"/></g>
            <use href="#m-train" x="432" y="377" width="28" height="28"/><use href="#m-train" x="692" y="520" width="28" height="28"/><use href="#m-train" x="691" y="701" width="28" height="28"/><use href="#m-train" x="727" y="780" width="28" height="28"/><use href="#m-train" x="790" y="863" width="28" height="28"/>
            <use href="#m-shield" x="909" y="442" width="36" height="36"/><use href="#m-shield" x="895" y="818" width="36" height="36"/>
            <g class="num"><text x="927" y="467">1S</text><text x="913" y="843">1S</text></g>

            <!-- route -->
            <g class="route-edge"><use href="#route"/></g>
            <g class="route"><path id="route" d="M1079 184l-27 42-14 8-17 10-119 17h-39l-29 10-68 11-26-3-25 10-249 32-2-6 6 23-25 50-20 47-3 48 11 26 6 60-5 46 18 57 5 43 6 21-50-21M1038 234l10 10M396 761l2-14"/></g>

            <!-- stops -->
            <g class="pin"><path d="M1042 244c-3-16-23-25-23-44a23 23 0 0 1 46 0c0 19-20 28-23 44z"/><text x="1042" y="208">1</text><path d="M390 766c-3-16-23-25-23-44a23 23 0 0 1 46 0c0 19-20 28-23 44z"/><text x="390" y="731">2</text></g>
          </svg>

          <div class="map-type"><button class="on">Mapa</button><button>Satélite</button></div>
          <button class="map-btn full" aria-label="Pantalla completa"><svg width="34" height="34" viewBox="0 0 18 18"><path d="M0 0v6h2V2h4V0zm16 0h-4v2h4v4h2V0zm0 16h-4v2h6v-6h-2zM2 12H0v6h6v-2H2z"/></svg></button>
          <div class="map-side">
            <button class="map-btn round" aria-label="Controles de cámara"><svg width="44" height="44" viewBox="0 0 44 44"><path d="M15 10l7-8 7 8-3 3-4-4-4 4zM15 34l7 8 7-8-3-3-4 4-4-4zM10 15l-8 7 8 7 3-3-4-4 4-4zM34 15l8 7-8 7-3-3 4-4-4-4z"/></svg></button>
            <button class="map-btn" aria-label="Pegman"><svg width="34" height="54" viewBox="0 0 34 54"><path fill="#fbb014" stroke="#a86a1c" stroke-width="1" d="M10 19q-5 0-6 5L1 38l4 1 4-9v23h7V40h2v13h7V30l4 9 4-1-3-14q-1-5-6-5z"/><circle cx="17" cy="10" r="9" fill="#fbb014" stroke="#a86a1c"/><path fill="#e06d18" d="M11 19h12l-6 9z"/></svg></button>
          </div>
          <a class="google" href="#"><span class="b">G</span><span class="r">o</span><span class="y">o</span><span class="b">g</span><span class="g">l</span><span class="r">e</span></a>
          <div class="credits"><button>Combinaciones de teclas</button><span>Datos del mapa ©2025 Google</span><a href="#">Condiciones</a><a href="#">Informar un error en el mapa</a></div>
        </div>

        <div class="costs">
          <div class="card">
            <div class="row head"><h3>Peajes</h3><b>$ 8.00</b><button aria-label="Agregar peaje"><svg width="28" height="28"><use href="#i-plus"/></svg></button></div>
            <div class="row"><label for="toll1">Ovalo Monitor</label><input id="toll1" value="$ 5"><button aria-label="Quitar Ovalo Monitor"><svg width="32" height="32"><use href="#i-close"/></svg></button></div>
            <div class="row"><label for="toll2">Trebol Javier Prado Oeste</label><input id="toll2" value="$ 3"><button aria-label="Quitar Trebol Javier Prado Oeste"><svg width="32" height="32"><use href="#i-close"/></svg></button></div>
          </div>
          <div class="card">
            <div class="row head"><h3>Pausas</h3><b>$ 0.00</b><button aria-label="Agregar pausa"><svg width="28" height="28"><use href="#i-plus"/></svg></button></div>
          </div>
          <dl class="totals"><dt>Descuento</dt><dd>$ 0.00</dd><dt>Total</dt><dd>$ 14.01</dd></dl>
        </div>
      </div>
    </div>

    <footer class="dialog-foot"><button class="save">GUARDAR</button></footer>
  </section>
</div>

<div class="side-tab"></div>

</body>
</html>
```
FILE: styles.css
```css
* {
  box-sizing: border-box;
}

body {
  margin: 0;
  height: 100vh;
  overflow: hidden;
  background: #efefef;
  color: #212121;
  font-family: Mulish, Lato, sans-serif;
  font-size: 25px;
  font-weight: 500;
}

button,
input {
  font: inherit;
  color: inherit;
}

button {
  display: flex;
  align-items: center;
  justify-content: center;
  padding: 0;
  border: 0;
  background: none;
  cursor: pointer;
}

a {
  color: inherit;
  text-decoration: none;
}

h1, h2, h3, dl, dd {
  margin: 0;
}

svg {
  fill: currentColor;
  flex: none;
}

.sprite {
  position: absolute;
  width: 0;
  height: 0;
}

/* layout */
.app {
  display: flex;
  height: 100vh;
}

.main {
  flex: 1;
  display: flex;
  flex-direction: column;
}

/* sidebar */
.sidebar {
  width: 502px;
  flex: none;
  background: #000;
  color: #fff;
  overflow: hidden;
  box-shadow: 0 0 6px rgba(0, 0, 0, .4);
}

.brand {
  display: flex;
  align-items: center;
  justify-content: space-between;
  height: 106px;
  margin-bottom: 15px;
  padding: 0 42px 8px 58px;
  background: #111;
}

.logo {
  display: flex;
  align-items: center;
  gap: 5px;
  font-family: "Liberation Sans", sans-serif;
  font-size: 36px;
  font-weight: 700;
  letter-spacing: 2px;
  -webkit-text-stroke: 2px #fff;
}

.logo-cut {
  fill: #111;
}

.menu a,
.menu h2 {
  display: flex;
  align-items: center;
  height: 72px;
  padding-left: 42px;
}

.menu a > svg {
  width: 28px;
  height: 28px;
  margin-right: 29px;
}

.menu h2 {
  font-size: 22px;
  font-weight: 500;
  color: #999;
}

.menu a.active {
  background: #e46400;
}

.menu a > .more {
  width: 20px;
  margin: 0 56px 0 auto;
}

/* top bar */
.topbar {
  display: flex;
  height: 106px;
  background: #fff;
  box-shadow: 0 2px 6px rgba(0, 0, 0, .5);
}

.topbar > button + button {
  border-left: 2px solid #e0e0e0;
}

.quick {
  flex: 1;
  display: flex;
  align-items: center;
  padding: 0 0 8px 28px;
}

.quick button {
  width: 72px;
  color: #777;
  font-family: Roboto, sans-serif;
  font-size: 37px;
  font-weight: 700;
}

.quick .star {
  color: #faaf00;
}

.user {
  padding-right: 20px;
}

.user,
.region {
  padding-bottom: 6px;
}

.avatar {
  display: flex;
  align-items: center;
  justify-content: center;
  width: 72px;
  height: 72px;
  margin-right: 22px;
  border-radius: 50%;
  background: #b0b0b0;
  color: #fff;
}

.who {
  display: flex;
  flex-direction: column;
  align-items: flex-start;
  gap: 6px;
  margin-right: 26px;
  font-weight: 600;
}

.who small {
  font-size: 20px;
  font-weight: 500;
  color: #777;
}

.caret {
  width: 18px;
  height: 18px;
}

.region {
  width: 208px;
  padding-left: 16px;
  gap: 14px;
  justify-content: flex-start;
}

.region .caret {
  margin-left: 6px;
}

.region,
.cell {
  font-weight: 600;
}

.cell {
  gap: 10px;
  width: 117px;
  padding-bottom: 6px;
}

.cell.bell {
  width: 114px;
}

.muted {
  color: #777;
}

.bell {
  position: relative;
}

.badge {
  position: absolute;
  top: 10px;
  right: 8px;
  padding: 0 10px;
  border-radius: 18px;
  background: #e46400;
  color: #fff;
  font-size: 24px;
  font-weight: 600;
  line-height: 36px;
}

/* page behind */
.page {
  flex: 1;
  display: flex;
  flex-direction: column;
  padding: 38px 25px 0 432px;
}

.tools {
  display: flex;
  align-self: flex-end;
  border: 1px solid #bbb;
  border-radius: 8px;
}

.tools button {
  width: 58px;
  height: 48px;
}

.tools button + button {
  border-left: 1px solid #bbb;
}

.sheet {
  flex: 1;
  margin-top: 36px;
  border-radius: 16px 16px 0 0;
  background: #fff;
  box-shadow: 0 0 3px rgba(0, 0, 0, .3);
}

.side-tab {
  position: fixed;
  right: 0;
  top: 1007px;
  width: 10px;
  height: 152px;
  border-radius: 8px 0 0 8px;
  background: linear-gradient(#003cff 58px, #1b35b8 58px, #1b35b8 60px, #003cff 60px);
}

/* dialog */
.overlay {
  position: fixed;
  inset: 0;
  padding: 155px 436px 33px 438px;
  background: rgba(0, 0, 0, .5);
}

.dialog {
  display: flex;
  flex-direction: column;
  height: 100%;
  border-radius: 8px;
  overflow: hidden;
  background: #fff;
  box-shadow: 0 22px 30px -14px rgba(0, 0, 0, .2), 0 48px 76px 6px rgba(0, 0, 0, .14), 0 18px 92px 16px rgba(0, 0, 0, .12);
}

.dialog-head {
  display: flex;
  align-items: center;
  height: 116px;
  padding: 0 68px 4px 43px;
  background: #111;
  color: #fff;
}

.dialog-head h1 {
  font-size: 35px;
  font-weight: 700;
}

.dialog-head a {
  margin: 8px 0 0 12px;
  color: #999;
}

.dialog-head .close {
  margin-left: auto;
}

.dialog-body {
  flex: 1;
  display: flex;
  flex-direction: column;
  gap: 30px;
  padding: 29px 43px;
}

.dialog-foot {
  display: flex;
  justify-content: flex-end;
  padding: 29px 43px;
  border-top: 1px solid #dadada;
}

.save {
  width: 186px;
  height: 66px;
  border-radius: 8px;
  background: #e46400;
  color: #fff;
  font-weight: 700;
  box-shadow: 0 3px 6px rgba(0, 0, 0, .4);
}

.card {
  border: 1px solid #e0e0e0;
  border-bottom: 2px solid #dadada;
  border-radius: 8px;
  overflow: hidden;
}

.card h3 {
  font-size: 25px;
  font-weight: 600;
}

.stops h3 {
  padding-left: 19px;
  line-height: 72px;
}

table {
  width: 100%;
  border-spacing: 0;
  table-layout: fixed;
}

.c-id { width: 88px; }
.c-money { width: 230px; }
.c-min { width: 171px; }

th,
td {
  height: 73px;
  padding: 0 9px;
  border-top: 1px solid #dadada;
  border-left: 1px solid #e0e0e0;
  text-align: left;
  white-space: nowrap;
}

td {
  height: 83px;
}

th {
  font-weight: 600;
}

th:first-child,
td:first-child {
  padding: 0 0 0 19px;
  border-left: 0;
}

th:nth-child(2),
td:nth-child(2) {
  border-left: 0;
}

tr.hover {
  background: #f4f4f4;
}

td > input,
.row input,
.field {
  width: 100%;
  height: 67px;
  padding: 0 24px;
  border: 1px solid #bdbdbd;
  border-radius: 8px;
  background: transparent;
}

td > input.on {
  border-color: #212121;
}

.field {
  display: flex;
  align-items: center;
}

.field input {
  flex: 1;
  width: 0;
  padding: 0;
  border: 0;
  background: none;
}

.field span {
  font-size: 22px;
  color: #777;
}

.columns {
  flex: 1;
  display: flex;
  gap: 29px;
}

.costs {
  width: 720px;
  display: flex;
  flex-direction: column;
  gap: 30px;
}

.row {
  display: flex;
  align-items: center;
  height: 83px;
  padding-left: 18px;
  border-top: 1px solid #dadada;
}

.row.head {
  height: 78px;
  border-top: 0;
}

.row h3,
.row label {
  flex: 1;
}

.row b {
  font-weight: 700;
}

.row input {
  width: 213px;
}

.row button {
  width: 88px;
  padding-left: 8px;
  color: #777;
}

.totals {
  display: grid;
  grid-template-columns: 1fr 305px;
  margin-top: -8px;
  text-align: right;
  font-size: 36px;
  font-weight: 600;
  line-height: 72px;
}

/* map */
.map {
  position: relative;
  flex: 1;
  min-width: 0;
  border: 1px solid #dadada;
  border-radius: 8px;
  overflow: hidden;
  font-family: Roboto, sans-serif;
  font-weight: 400;
}

.map-canvas {
  position: absolute;
  width: 100%;
  height: 100%;
}

.land { fill: #f4f2f3; }
.relief { fill: #eeecee; }
.relief .warm { fill: #f5f4ee; }
.water { fill: #85d2ea; }
.beach { fill: #efe9da; }
.park { fill: #b9efca; }
.shop { fill: #f8ebd0; }
.pink { fill: #fbe0df; }

.st,
.road,
.stream,
.hwy,
.hwy-edge,
.route,
.route-edge {
  fill: none;
  stroke-linejoin: round;
  stroke-linecap: round;
}

.st { stroke: #d3dbe5; stroke-width: 2; }
.road { stroke: #ced7e1; stroke-width: 6; }
.road.big { stroke-width: 9; }
.stream { stroke: #90dcec; stroke-width: 3; }
.hwy-edge { stroke: #6a82ab; stroke-width: 14; }
.hwy { stroke: #889fc1; stroke-width: 11; }
.hwy path { stroke-width: inherit; }
.route-edge { stroke: #1a57cf; stroke-width: 13; }
.route { stroke: #5589f5; stroke-width: 9; }

.lb text {
  paint-order: stroke;
  stroke: #fff;
  stroke-width: 4px;
  stroke-linejoin: round;
}

.lb { font-size: 25px; }
.lb .mid { text-anchor: middle; }
.lb .end { text-anchor: end; }
.green { fill: #24794b; }
.blue { fill: #1b63e6; }
.purple { fill: #7434cd; }
.slate { fill: #4c6172; }
.stop { fill: #2f4357; font-size: 24px; font-weight: 500; }
.town { fill: #202124; font-weight: 500; }
.city { fill: #202124; font-size: 36px; font-weight: 500; }
.caps { fill: #36393d; font-size: 24px; font-weight: 500; letter-spacing: 3px; }
.caps.small { font-size: 17px; letter-spacing: 2px; }
.street { fill: #202124; font-size: 20px; }

.poi-green { color: #27995f; }
.poi-blue { color: #1a82ff; }
.poi-slate { color: #627b8b; }
.poi-purple { color: #a04dff; }

.num {
  fill: #444;
  font-size: 19px;
  font-weight: 500;
  text-anchor: middle;
}

.pin path {
  fill: #dd2a2a;
  stroke: #b31412;
}

.pin {
  fill: #000;
  font-size: 26px;
  text-anchor: middle;
}

.map-type {
  position: absolute;
  top: 17px;
  left: 18px;
  display: flex;
}

.map-type button {
  height: 72px;
  padding: 0 31px;
  background: #fff;
  color: #565656;
  font-size: 32px;
  box-shadow: 0 0 6px rgba(0, 0, 0, .25);
}

.map-type .on {
  color: #000;
  font-weight: 500;
}

.map-btn {
  width: 72px;
  height: 72px;
  border-radius: 4px;
  background: #fff;
  color: #565656;
  box-shadow: 0 2px 6px rgba(0, 0, 0, .3);
}

.map-btn.round {
  border-radius: 50%;
}

.map-btn.full {
  position: absolute;
  top: 17px;
  right: 18px;
}

.map-side {
  position: absolute;
  right: 18px;
  bottom: 43px;
  display: flex;
  flex-direction: column;
  gap: 56px;
}

.google {
  position: absolute;
  left: 18px;
  bottom: 5px;
  font-family: Lato, sans-serif;
  font-size: 32px;
  font-weight: 600;
  -webkit-text-stroke: 4px #fff;
  paint-order: stroke;
}

.google .b { color: #3f7df3; }
.google .r { color: #df3b2f; }
.google .y { color: #f5b400; }
.google .g { color: #2fa14f; }

.credits {
  position: absolute;
  right: 0;
  bottom: 0;
  display: flex;
  gap: 22px;
  padding: 4px 10px 0;
  background: rgba(245, 245, 245, .7);
  color: #000;
  font-size: 18px;
  line-height: 24px;
}
```
